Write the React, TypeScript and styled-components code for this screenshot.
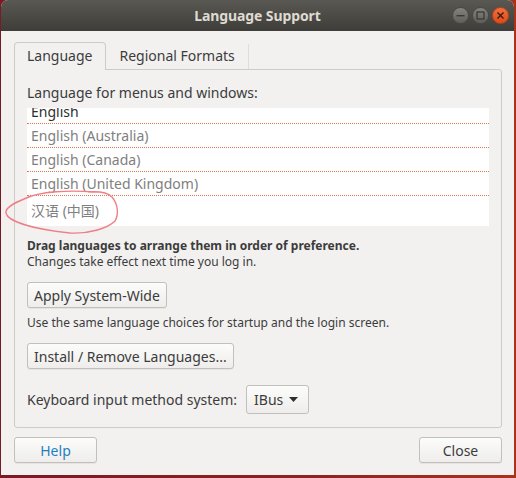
import styled, { createGlobalStyle } from "styled-components";

const GlobalStyle = createGlobalStyle`
  html, body {
    margin: 0;
    padding: 0;
    width: 516px;
    height: 478px;
    overflow: hidden;
    background: linear-gradient(90deg, #7a1a24 0%, #8c2222 60%, #a8341c 100%);
    font-family: "Noto Sans", "DejaVu Sans", "Noto Sans CJK SC", sans-serif;
  }
`;

const Desktop = styled.div`
  padding: 0 2px 3px 1px;
  position: relative;
`;

const Window = styled.div`
  width: 513px;
  height: 475px;
  border-radius: 7px 7px 0 0;
  overflow: hidden;
  display: flex;
  flex-direction: column;
  background: #f2f1f0;
`;

const TitleBar = styled.div`
  height: 31px;
  flex: none;
  display: grid;
  grid-template-columns: 1fr auto 1fr;
  align-items: center;
  background: linear-gradient(#5a5852, #3e3d39);
`;

const Title = styled.div`
  grid-column: 2;
  color: #dfdbd2;
  font-weight: bold;
  font-size: 14px;
  letter-spacing: -0.1px;
`;

const Controls = styled.div`
  grid-column: 3;
  justify-self: end;
  display: flex;
  gap: 3px;
  padding-right: 5px;
`;

const WinButton = styled.div<{ $close?: boolean }>`
  width: 17px;
  height: 17px;
  border-radius: 50%;
  display: flex;
  align-items: center;
  justify-content: center;
  box-sizing: border-box;
  border: 1px solid ${(p) => (p.$close ? "#b8431a" : "#4a4844")};
  background: ${(p) =>
    p.$close
      ? "linear-gradient(#f0703f, #df4a17)"
      : "linear-gradient(#85837e, #605e59)"};
`;

const Body = styled.div`
  flex: 1;
  display: flex;
  flex-direction: column;
  padding: 11px 12px 0 13px;
`;

const TabRow = styled.div`
  display: flex;
  height: 27px;
  position: relative;
  z-index: 1;
`;

const Tab = styled.div<{ $active?: boolean }>`
  box-sizing: border-box;
  display: flex;
  align-items: center;
  font-size: 14px;
  color: #3c3c3c;
  background: #f2f1f0;
  border-radius: ${(p) => (p.$active ? "4px 4px 0 0" : "0")};
  border: ${(p) => (p.$active ? "1px solid #cfcac5" : "none")};
  border-bottom: none;
  border-right: ${(p) => (p.$active ? "1px solid #cfcac5" : "1px solid #e0ddd9")};
  padding: ${(p) => (p.$active ? "0 13px 2px 12px" : "0 13px 2px 13px")};
  margin-top: ${(p) => (p.$active ? "0" : "2px")};
  height: ${(p) => (p.$active ? "28px" : "25px")};
`;

const Panel = styled.div`
  box-sizing: border-box;
  height: 359px;
  border: 1px solid #cfcac5;
  border-radius: 0 3px 3px 3px;
  padding: 13px 12px 0 12px;
  display: flex;
  flex-direction: column;
  color: #3c3c3c;
`;

const Label = styled.div`
  font-size: 14px;
  line-height: 19px;
  color: #3c3c3c;
`;

const List = styled.div`
  margin-top: 6px;
  height: 118px;
  background: #ffffff;
  overflow: hidden;
`;

/* list is scrolled down a few pixels, as in the dialog */
const ListInner = styled.div`
  margin-top: -8px;
`;

const Row = styled.div<{ $dim?: boolean; $last?: boolean }>`
  height: ${(p) => (p.$last ? "28px" : "23px")};
  padding-left: 4px;
  display: flex;
  align-items: center;
  font-size: 14px;
  color: ${(p) => (p.$dim ? "#808080" : "#2e2e2e")};
  border-bottom: ${(p) => (p.$last ? "none" : "1px dotted #e07a4e")};
`;

const Hint = styled.div<{ $bold?: boolean }>`
  font-size: 12px;
  line-height: 16px;
  font-weight: ${(p) => (p.$bold ? "bold" : "normal")};
  color: #3c3c3c;
`;

const HintBlock = styled.div`
  margin-top: 12px;
`;

const Button = styled.button<{ $blue?: boolean; $w?: number }>`
  box-sizing: border-box;
  height: 26px;
  width: ${(p) => (p.$w ? `${p.$w}px` : "auto")};
  padding: 0 6px;
  border: 1px solid #c3bfba;
  border-radius: 3px;
  background: linear-gradient(#fcfcfb, #eeedeb);
  box-shadow: 0 1px 0 rgba(0, 0, 0, 0.05);
  font-family: inherit;
  font-size: 14px;
  color: ${(p) => (p.$blue ? "#1e7fc4" : "#3c3c3c")};
  align-self: flex-start;
`;

const Stack = styled.div<{ $top: number }>`
  margin-top: ${(p) => p.$top}px;
  display: flex;
  flex-direction: column;
`;

const KeyboardRow = styled.div`
  margin-top: 16px;
  display: flex;
  align-items: center;
  gap: 9px;
`;

const Combo = styled.div`
  box-sizing: border-box;
  height: 29px;
  width: 63px;
  border: 1px solid #c3bfba;
  border-radius: 3px;
  background: linear-gradient(#fcfcfb, #eeedeb);
  display: flex;
  align-items: center;
  justify-content: space-between;
  padding: 0 10px 0 7px;
  font-size: 14px;
  color: #3c3c3c;
`;

const Footer = styled.div`
  margin-top: 9px;
  display: flex;
  justify-content: space-between;
`;

const Annotation = styled.svg`
  position: absolute;
  left: 0;
  top: 186px;
  pointer-events: none;
`;

export default function App() {
  return (
    <>
      <GlobalStyle />
      <Desktop>
        <Window>
          <TitleBar>
            <Title>Language Support</Title>
            <Controls>
              <WinButton>
                <svg width="9" height="9" viewBox="0 0 9 9">
                  <rect x="0.5" y="4" width="8" height="1.4" fill="#3a3935" />
                </svg>
              </WinButton>
              <WinButton>
                <svg width="9" height="9" viewBox="0 0 9 9">
                  <rect x="1" y="1" width="7" height="7" fill="none" stroke="#3a3935" strokeWidth="1.3" />
                </svg>
              </WinButton>
              <WinButton $close>
                <svg width="9" height="9" viewBox="0 0 9 9">
                  <path d="M1.5 1.5 L7.5 7.5 M7.5 1.5 L1.5 7.5" stroke="#3a1c10" strokeWidth="1.4" />
                </svg>
              </WinButton>
            </Controls>
          </TitleBar>
          <Body>
            <TabRow>
              <Tab $active>Language</Tab>
              <Tab>Regional Formats</Tab>
            </TabRow>
            <Panel>
              <Label>Language for menus and windows:</Label>
              <List>
                <ListInner>
                  <Row>English</Row>
                  <Row $dim>English (Australia)</Row>
                  <Row $dim>English (Canada)</Row>
                  <Row $dim>English (United Kingdom)</Row>
                  <Row $dim $last>汉语 (中国)</Row>
                </ListInner>
              </List>
              <HintBlock>
                <Hint $bold>Drag languages to arrange them in order of preference.</Hint>
                <Hint>Changes take effect next time you log in.</Hint>
              </HintBlock>
              <Stack $top={12}>
                <Button>Apply System-Wide</Button>
              </Stack>
              <Stack $top={7}>
                <Hint>Use the same language choices for startup and the login screen.</Hint>
              </Stack>
              <Stack $top={12}>
                <Button>Install / Remove Languages...</Button>
              </Stack>
              <KeyboardRow>
                <Label>Keyboard input method system:</Label>
                <Combo>
                  IBus
                  <svg width="9" height="5" viewBox="0 0 9 5">
                    <path d="M0 0 L9 0 L4.5 5 Z" fill="#2e2e2e" />
                  </svg>
                </Combo>
              </KeyboardRow>
            </Panel>
            <Footer>
              <Button $blue $w={83}>Help</Button>
              <Button $w={83}>Close</Button>
            </Footer>
          </Body>
        </Window>
        <Annotation width="130" height="52" viewBox="0 0 130 52">
          <path
            d="M95 6 C70 4, 40 5, 24 13 C12 18, 5 22, 6 27 C8 36, 35 43, 70 47 C90 48, 108 42, 115 35 C119 28, 118 18, 112 11 C108 7, 100 5, 88 6"
            fill="none"
            stroke="#ef7f86"
            strokeWidth="1.4"
          />
        </Annotation>
      </Desktop>
    </>
  );
}
